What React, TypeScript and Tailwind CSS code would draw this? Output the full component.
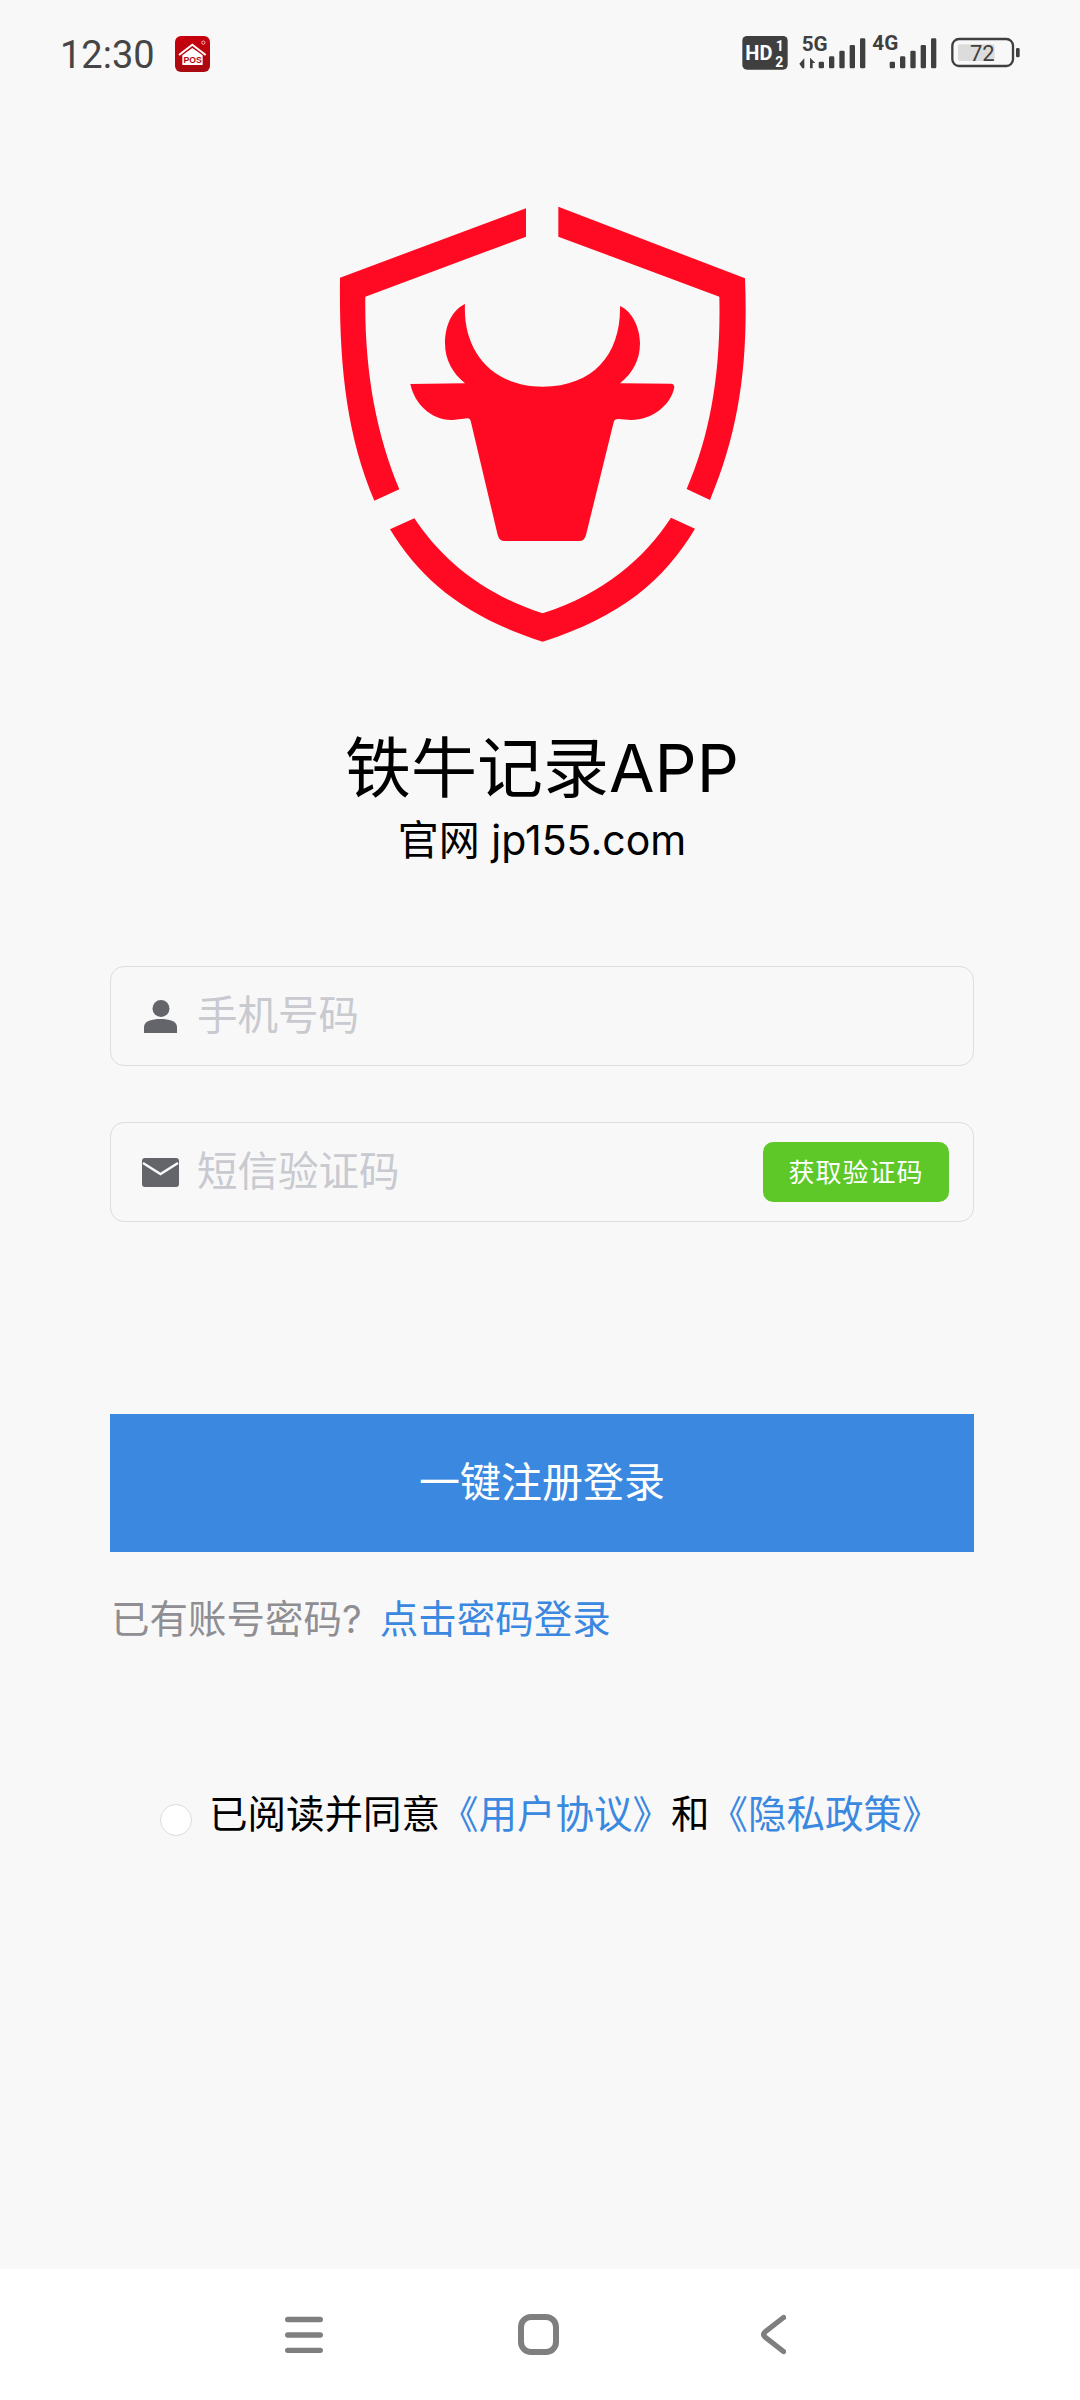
const cjk = "font-['Inter','Noto_Sans_CJK_SC',sans-serif]";

function PosIcon() {
  return (
    <svg width="35" height="36" viewBox="0 0 105 108">
      <defs>
        <linearGradient id="pos" x1="0" y1="0" x2="0" y2="1">
          <stop offset="0" stopColor="#c8000c" />
          <stop offset="1" stopColor="#a80a12" />
        </linearGradient>
      </defs>
      <rect width="105" height="108" rx="18" fill="url(#pos)" />
      <path d="M12 57 L52 26 L92 57" fill="none" stroke="#fff" strokeWidth="6" />
      <path d="M22 58 L52 36 L83 58 V87 H22 Z" fill="#fff" />
      <circle cx="85" cy="20" r="5" fill="none" stroke="#fff" strokeWidth="2" />
      <text x="53" y="81" textAnchor="middle" fontFamily="Liberation Sans" fontWeight="700" fontSize="26" fill="#b40610">POS</text>
    </svg>
  );
}

function Bars({ x }: { x: number }) {
  const tops = [128, 112, 95, 78, 58];
  return (
    <>
      {tops.map((top, i) => (
        <rect key={i} x={x + i * 31} y={top} width="16" height={148 - top} rx="4" fill="#3f3f3f" />
      ))}
    </>
  );
}

function StatusIcons() {
  return (
    <svg width="320" height="70" viewBox="0 0 960 210">
      <rect x="67" y="51" width="136" height="101" rx="14" fill="#3f3f3f" />
      <text x="76" y="122" fontFamily="Roboto" fontWeight="700" fontSize="60" fill="#fff">HD</text>
      <text x="167" y="96" fontFamily="Roboto" fontWeight="700" fontSize="42" fill="#fff">1</text>
      <text x="166" y="143" fontFamily="Roboto" fontWeight="700" fontSize="42" fill="#fff">2</text>
      <text x="245" y="96" fontFamily="Roboto" fontWeight="700" fontSize="62" fill="#3f3f3f">5G</text>
      <path d="M238 134 L253 118 V148 H247 Z M270 116 L286 132 H278 V148 H270 Z" fill="#3f3f3f" />
      <Bars x={296} />
      <text x="457" y="92" fontFamily="Roboto" fontWeight="700" fontSize="62" fill="#3f3f3f">4G</text>
      <Bars x={509} />
      <rect x="697" y="60" width="182" height="81" rx="20" fill="none" stroke="#3f3f3f" strokeWidth="7" />
      <rect x="714" y="76" width="110" height="50" rx="6" fill="#dcdcdc" />
      <text x="787" y="125" textAnchor="middle" fontFamily="Roboto" fontSize="66" fill="#3f3f3f">72</text>
      <rect x="888" y="87" width="11" height="28" rx="4" fill="#3f3f3f" />
    </svg>
  );
}

function Logo() {
  return (
    <svg width="440" height="460" viewBox="0 0 1320 1380">
      <g fill="#ff0a22">
        <path d="M615 55 L57 263 C54 520 75 730 160 932 L235 898 C165 730 130 540 133 320 L615 140 Z" />
        <path d="M712 50 L1272 265 C1282 520 1255 720 1167 930 L1097 897 C1170 730 1200 540 1195 320 L712 140 Z" />
        <path d="M207 1018 L280 985 C360 1105 480 1210 665 1270 C850 1210 970 1105 1050 983 L1122 1016 C1030 1170 900 1280 665 1355 C430 1280 300 1170 207 1018 Z" />
        <path d="M432 342 C385 365 372 420 372 460 C372 510 395 550 432 580 L268 582 C280 640 330 692 395 690 L440 685 Q448 685 450 697 L530 1035 Q535 1053 550 1053 L775 1053 Q790 1053 795 1035 L878 697 Q880 687 892 687 L930 690 C995 690 1050 645 1060 592 Q1060 582 1050 581 L897 580 C935 550 957 510 957 460 C957 415 935 365 897 348 C900 490 820 590 665 590 C510 590 425 480 432 342 Z" />
      </g>
    </svg>
  );
}

function PersonIcon() {
  return (
    <svg width="33" height="33" viewBox="0 0 33 33" fill="#64656a">
      <circle cx="17" cy="8.5" r="8.5" />
      <path d="M0 33 V27 C0 21 8 19 16.5 19 C25 19 33 21 33 27 V33 Z" />
    </svg>
  );
}

function MailIcon() {
  return (
    <svg width="37" height="29" viewBox="0 0 37 29" className="-ml-[2px]">
      <rect width="37" height="29" rx="3" fill="#64656a" />
      <path d="M1 5 L18.5 16 L36 5" fill="none" stroke="#f9f9f9" strokeWidth="2.4" />
    </svg>
  );
}

function Field({ icon, placeholder, children }: { icon: React.ReactNode; placeholder: string; children?: React.ReactNode }) {
  return (
    <div className="flex items-center h-[100px] w-[864px] border border-[#dddddd] rounded-[14px] pl-[33px] pr-[24px]">
      <div className="w-[53px] flex items-center">{icon}</div>
      <input
        placeholder={placeholder}
        className="flex-1 min-w-0 bg-transparent outline-none text-[40.5px] placeholder:text-[#c8cad0]"
      />
      {children}
    </div>
  );
}

export default function App() {
  return (
    <div className={`w-[1080px] h-[2400px] flex flex-col bg-[#f8f8f8] ${cjk}`}>
      <div className="h-[108px] flex items-center justify-between pl-[60px] pr-[40px] shrink-0">
        <div className="flex items-center gap-[20px]">
          <span className="font-['Roboto'] text-[38px] text-[#454545] pt-[2px]">12:30</span>
          <PosIcon />
        </div>
        <StatusIcons />
      </div>

      <div className="flex flex-col items-center pl-[4px]">
        <div className="mt-[82px] mr-[2px]">
          <Logo />
        </div>
        <h1 className="mt-[78px] h-[80px] leading-[80px] text-[66px] text-black">铁牛记录APP</h1>
        <p className="mt-[4px] h-[56px] leading-[56px] text-[41px] text-black">官网 jp155.com</p>

        <div className="mt-[98px] flex flex-col gap-[56px]">
          <Field icon={<PersonIcon />} placeholder="手机号码" />
          <Field icon={<MailIcon />} placeholder="短信验证码">
            <button className="w-[186px] h-[60px] rounded-[10px] bg-[#5dc827] text-white text-[26px] tracking-[1px]">
              获取验证码
            </button>
          </Field>
        </div>

        <button className="mt-[192px] w-[864px] h-[138px] bg-[#3a88e0] text-white text-[41px]">
          一键注册登录
        </button>

        <div className="mt-[42px] w-[864px] h-[50px] leading-[50px] text-[38.500px] pl-[1px]">
          <span className="text-[#8e8e93]">已有账号密码?</span>
          <span className="text-[#3a88e0] ml-[18px]">点击密码登录</span>
        </div>

        <div className="mt-[146px] w-[864px] h-[50px] flex items-center pl-[50px] text-[38.500px]">
          <span className="w-[32px] h-[32px] mt-[10px] rounded-full bg-white border border-[#dddddd] mr-[17px]" />
          <span className="text-black">已阅读并同意</span>
          <span className="text-[#3a88e0]">《用户协议》</span>
          <span className="text-black">和</span>
          <span className="text-[#3a88e0]">《隐私政策》</span>
        </div>
      </div>

      <div className="mt-auto h-[131px] bg-white shrink-0">
        <div className="flex items-start pt-[45px] pl-[285px]">
          <svg width="38" height="41" viewBox="0 0 38 41">
            <g stroke="#7f7f7f" strokeWidth="5.300" strokeLinecap="round">
              <path d="M2.700 5.500 H35.300" />
              <path d="M2.700 21 H35.300" />
              <path d="M2.700 36.300 H35.300" />
            </g>
          </svg>
          <svg width="41" height="41" viewBox="0 0 41 41" className="ml-[195px]">
            <rect x="3" y="3" width="35" height="35" rx="10" fill="none" stroke="#7f7f7f" strokeWidth="6" />
          </svg>
          <svg width="25" height="41" viewBox="0 0 25 41" className="ml-[202px]">
            <path d="M22.500 3.500 L4 18 Q1.500 20.500 4 23 L22.500 37.500" fill="none" stroke="#7f7f7f" strokeWidth="5.300" strokeLinecap="round" />
          </svg>
        </div>
      </div>
    </div>
  );
}
